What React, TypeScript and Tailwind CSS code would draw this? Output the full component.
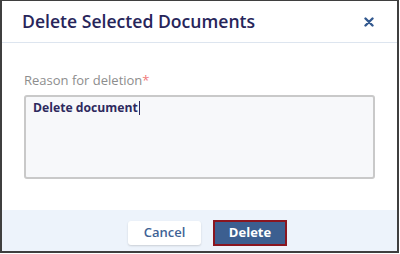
import React from 'react';

const App: React.FC = () => {
  return (
    <div className="w-[400px] h-[254px] bg-white" style={{ fontFamily: '"Open Sans", "Liberation Sans", sans-serif' }}>
      <div className="w-[399px] h-[253px] border-t border-l-2 border-r-2 border-b-2 border-[#3f3f3f] flex flex-col">
        {/* Header */}
        <div className="h-[42px] border-b border-[#dde5ef] flex items-center justify-between pl-[20px] pr-[23px]">
          <h1 className="text-[17.6px] font-semibold text-[#27255a]">Delete Selected Documents</h1>
          <svg width="10" height="10" viewBox="0 0 10 10" className="mt-[1px]">
            <path d="M1.5 1.5 L8.5 8.5 M8.5 1.5 L1.5 8.5" stroke="#33598f" strokeWidth="2.4" strokeLinecap="round" />
          </svg>
        </div>

        {/* Body */}
        <div className="flex-1 px-[22px] pt-[28px]">
          <label className="block text-[13px] text-[#8d8d8d] leading-[18px]">
            Reason for deletion<span className="text-[#f07b7b]">*</span>
          </label>
          <div className="mt-[6px] h-[84px] w-[351px] border-2 border-[#c9c9c9] rounded-[3px] bg-[#f7f8fa] px-[7px] pt-[0px] leading-[18px]">
            <span className="text-[12.2px] font-bold text-[#2e2a5e]">Delete document</span>
            <span className="inline-block w-[1px] h-[14px] bg-[#2e2a5e] align-middle ml-[1px]" />
          </div>
        </div>

        {/* Footer */}
        <div className="h-[41px] bg-[#edf3fb] flex items-center justify-center gap-[12px] pt-[5px] pl-[16px]">
          <button className="w-[73px] h-[24px] bg-white rounded-[3px] shadow-[0_1px_2px_rgba(0,0,0,0.15)] text-[13px] font-semibold text-[#3e6295]">
            Cancel
          </button>
          <button className="w-[74px] h-[26px] bg-[#3c5f90] border-2 border-[#8a1620] text-[13px] font-bold text-white">
            Delete
          </button>
        </div>
      </div>
    </div>
  );
};

export default App;
